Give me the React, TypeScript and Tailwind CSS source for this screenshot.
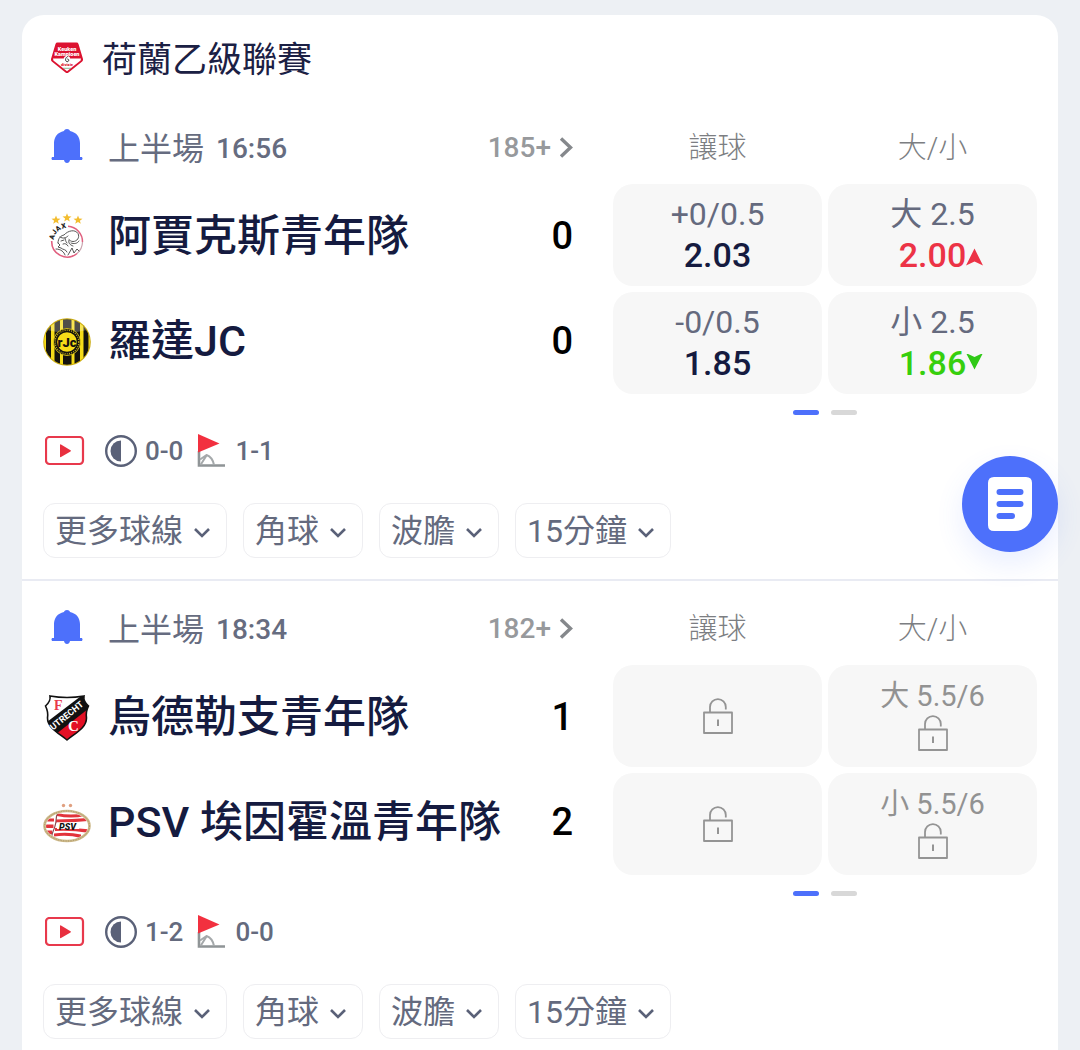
import type { ReactNode } from 'react';

type Trend = 'up' | 'down';

interface Odds {
  label?: string;
  value?: string;
  trend?: Trend;
}

interface Team {
  name: string;
  score: number;
  logo: ReactNode;
  handicap: Odds;
  total: Odds;
}

interface Match {
  id: string;
  period: string;
  clock: string;
  markets: string;
  halfTime: string;
  corners: string;
  teams: Team[];
}

function LeagueLogo() {
  return (
    <svg viewBox="0 0 34 34" className="h-[34px] w-[34px]" aria-hidden="true">
      <path
        d="M7.5 1.5h19q1.500 0 2 1.400L33 18q.4 1.500-.8 2.400L18.500 31.500q-1.500 1.100-3 0L1.800 20.400Q.6 19.500 1 18L5.500 2.900q.5-1.400 2-1.400Z"
        fill="#dc1230"
      />
      <path d="M3 17.500h28l-.4 2L17 30.300 3.400 19.500Z" fill="#fff" />
      <g fill="#fff" fontFamily="Roboto, sans-serif" fontWeight="900" fontSize="5.500" textAnchor="middle">
        <text x="17" y="9.500">Keuken</text>
        <text x="17" y="14.500">Kampioen</text>
      </g>
      <circle cx="17" cy="18.300" r="3.200" fill="#fff" />
      <path d="M17.800 15.500c-2.600 1-3 4.500-.8 5.200 2 .3 2.500-2.800.3-2.700" fill="none" stroke="#333" strokeWidth="1" />
      <text x="17" y="25" fill="#dc1230" fontFamily="Roboto, sans-serif" fontWeight="900" fontSize="4" textAnchor="middle">
        divisie
      </text>
      <path d="M13 27.300h8" stroke="#6fa67c" strokeWidth=".8" />
    </svg>
  );
}

function AjaxLogo() {
  const star = 'M0-4.500 1.200-1.500 4.500-1.300 1.900.7 2.800 3.800 0 2-2.800 3.800-1.900.7-4.500-1.300-1.200-1.500Z';
  return (
    <svg viewBox="0 0 48 48" className="h-12 w-12" aria-hidden="true">
      <g fill="#f3bd2f">
        <path transform="translate(13 7)" d={star} />
        <path transform="translate(24 4.800)" d={star} />
        <path transform="translate(35 7)" d={star} />
      </g>
      <path d="M25 13.200A15.500 15.500 0 0 1 39.500 29" fill="none" stroke="#e0607f" strokeWidth="1.500" />
      <path d="M39.500 29A15.500 15.500 0 0 1 34 40.500" fill="none" stroke="#c9a4ae" strokeWidth="1.200" />
      <path d="M8.700 28A15.500 15.500 0 0 0 34 40.500" fill="none" stroke="#e0607f" strokeWidth="1.600" />
      <g fill="#222" fontFamily="Roboto, sans-serif" fontWeight="900" fontSize="7">
        <text transform="translate(10.500 27) rotate(-72)">A</text>
        <text transform="translate(12 22) rotate(-53)">J</text>
        <text transform="translate(14.500 18.800) rotate(-36)">A</text>
        <text transform="translate(19 15.800) rotate(-14)">X</text>
      </g>
      <g fill="none" stroke="#444" strokeWidth=".9" strokeLinecap="round">
        <path d="M15 30c0-5 3-7.500 6-8 4-4.500 11-6 14-1.500 2 4-1 8-5 8-2 0-3-1-4-2" />
        <path d="M17 24c3 2 6 1 8-1M15 30l2 2-2 2 3 1c2 2 5 1 6 4M18 28l3-1M20 31c2-1 4 0 5 2M26 27c-1 3 1 5 4 6" />
        <path d="M13 36c5 0 8 3 9 6M25 42l4-7 2 5 3-4 2 2M28 30c3 1 6 1 8-2M22 25c1 2 0 3 2 5" />
      </g>
    </svg>
  );
}

function RodaLogo() {
  return (
    <svg viewBox="0 0 48 48" className="h-12 w-12" aria-hidden="true">
      <defs>
        <clipPath id="roda-clip">
          <circle cx="24" cy="24" r="22.800" />
        </clipPath>
      </defs>
      <circle cx="24" cy="24" r="23.800" fill="#c9a90c" />
      <g clipPath="url(#roda-clip)">
        <path fill="#f6dc18" d="M0 0h48v48H0z" />
        <path fill="#15130d" d="M3 0h5v48H3zM11.500 0h5.500v48h-5.500zM20 0h8.500v48H20zM31.500 0H37v48h-5.500zM40.500 0h5v48h-5z" />
        <path fill="#fff" opacity=".25" d="M4 0h40v12Q24 17 4 12Z" />
      </g>
      <circle cx="24" cy="24" r="13.500" fill="#15130d" stroke="#f6dc18" strokeWidth=".8" />
      <circle cx="24" cy="24" r="11.800" fill="none" stroke="#c7b320" strokeWidth="1.200" strokeDasharray="1 1.200" />
      <circle cx="24" cy="24" r="9.800" fill="#f6dc18" />
      <text x="24" y="28.500" fill="#15130d" fontFamily="Roboto, sans-serif" fontWeight="900" fontSize="13" textAnchor="middle">
        rJc
      </text>
    </svg>
  );
}

function UtrechtLogo() {
  return (
    <svg viewBox="0 0 48 48" className="h-12 w-12" aria-hidden="true">
      <defs>
        <clipPath id="utrecht-clip">
          <path d="M7 2q17 3 34 0-1 5 4.500 10-3 6-2 12c0 10-11 15-19.500 22C15.500 39 4.500 34 4.500 24q1-6-2-12Q8 7 7 2Z" />
        </clipPath>
      </defs>
      <g clipPath="url(#utrecht-clip)">
        <path fill="#fff" d="M0 0h48v48H0z" />
        <path fill="#e30f24" d="M48 12v36H14L8 38Z" />
        <path fill="#111" d="M0 31 42-1l8 12L8 44Z" />
      </g>
      <path
        d="M7 2q17 3 34 0-1 5 4.500 10-3 6-2 12c0 10-11 15-19.500 22C15.500 39 4.500 34 4.500 24q1-6-2-12Q8 7 7 2Z"
        fill="none"
        stroke="#111"
        strokeWidth="1.600"
      />
      <text x="11" y="16" fill="#e83a4a" fontFamily="Liberation Serif, serif" fontWeight="700" fontSize="14">
        F
      </text>
      <text x="25" y="37" fill="#fff" fontFamily="Liberation Serif, serif" fontWeight="700" fontSize="15">
        C
      </text>
      <text transform="translate(10 36.500) rotate(-39)" fill="#fff" fontFamily="Roboto, sans-serif" fontWeight="700" fontSize="9">
        UTRECHT
      </text>
    </svg>
  );
}

function PsvLogo() {
  return (
    <svg viewBox="0 0 48 48" className="h-12 w-12" aria-hidden="true">
      <defs>
        <clipPath id="psv-clip">
          <ellipse cx="24" cy="27" rx="21" ry="13.500" />
        </clipPath>
      </defs>
      <g fill="#e0a080">
        <circle cx="20.500" cy="6.500" r="1.700" />
        <circle cx="27.500" cy="6.500" r="1.700" />
      </g>
      <ellipse cx="24" cy="27" rx="22.500" ry="15" fill="#fff" stroke="#cdb98a" strokeWidth="2.600" />
      <ellipse cx="24" cy="27" rx="22.500" ry="15" fill="none" stroke="#a89464" strokeWidth="1" strokeDasharray="1 1.500" />
      <g clipPath="url(#psv-clip)">
        <path fill="#e2333b" d="M14 14q14 3 28 0v3q-14 3-28 0zM13 20.500q16 0 33-1.500v3q-16 2-33 1.500zM12 32q17-1 34 2v-3.500q-17-2.500-34-1.500zM11 37.500q14-2 27 1.500v-3.500q-13-3-27-1z" />
        <path fill="#e2333b" d="M2 19.500h9v3H2zM2 25.500h8.500V29H2zM2 31.500h7V35H2z" />
        <path d="M15 13c-3 6-1 9-3 14-1 5-4 7-3 12" fill="none" stroke="#8e4b50" strokeWidth="1.200" />
        <path d="M14 23.500h25l-3 6.500H14z" fill="#fff" />
      </g>
      <text
        x="24.500"
        y="30.500"
        fill="#111"
        fontFamily="Roboto, sans-serif"
        fontWeight="900"
        fontStyle="italic"
        fontSize="9"
        textAnchor="middle"
      >
        PSV
      </text>
    </svg>
  );
}

function BellIcon() {
  return (
    <svg viewBox="0 0 32 40" className="h-10 w-8" fill="#4d70fb" aria-hidden="true">
      <path d="M16 1c1.600 0 2.600.8 3.100 1.900C25.500 4.300 29 9 29 15v14h1.200c1 0 1.300.7 1.300 1.500s-.4 1.500-1.300 1.500H19c-.3 2-1.500 3-3 3s-2.700-1-3-3H1.800C.9 32 .5 31.300.5 30.500S.8 29 1.800 29H3V15C3 9 6.500 4.300 12.900 2.900 13.400 1.800 14.400 1 16 1Z" />
    </svg>
  );
}

function LockIcon() {
  return (
    <svg viewBox="0 0 30 36" className="h-9 w-[30px]" fill="none" stroke="#949494" strokeWidth="1.800" aria-hidden="true">
      <path d="M1 14.500h28v20.500H1zM7 14.500V9a7.900 7.900 0 0 1 15.800 0v2.500" strokeLinejoin="round" />
      <path d="M15 21.500v6.500" strokeWidth="2" />
    </svg>
  );
}

function VideoIcon() {
  return (
    <svg viewBox="0 0 40 30" className="h-[30px] w-10" aria-hidden="true">
      <rect x="1" y="1" width="37" height="27" rx="3.500" fill="none" stroke="#e8394c" strokeWidth="2.200" />
      <path d="M15 9v11.500q0 1 1 .5l9.500-5.500q1-.6 0-1.200L16 8.500q-1-.5-1 .5Z" fill="#e8303f" />
    </svg>
  );
}

function HalfTimeIcon() {
  return (
    <svg viewBox="0 0 32 32" className="h-8 w-8" aria-hidden="true">
      <circle cx="16" cy="16" r="14.800" fill="none" stroke="#5a6178" strokeWidth="2.400" />
      <path d="M16 5.500a10.500 10.500 0 0 0 0 21Z" fill="#5a6178" />
    </svg>
  );
}

function CornerIcon() {
  return (
    <svg viewBox="0 0 28 34" className="h-[34px] w-7" aria-hidden="true">
      <path d="M2 17v14.500h26" fill="none" stroke="#8f9496" strokeWidth="2.600" />
      <path d="M3 25.500 9.500 21q6 2 7.500 10M3.500 31l6-9.500" fill="none" stroke="#a5a9ab" strokeWidth="2" />
      <path d="M1 0 22.500 9.500 1 18.500Z" fill="#f2303f" />
    </svg>
  );
}

function ChevronDownIcon() {
  return (
    <svg viewBox="0 0 18 12" className="mt-1 h-3 w-[18px]" fill="none" stroke="#5a6178" strokeWidth="2.600" aria-hidden="true">
      <path d="m2 2 7 7 7-7" />
    </svg>
  );
}

function TrendIcon({ trend }: { trend: Trend }) {
  if (trend === 'up') {
    return (
      <svg viewBox="0 0 17 20" className="h-5 w-[17px]" aria-label="up">
        <path d="M8.500 2.500 17 19.500 8.500 15.500 0 19.500Z" fill="#ec3346" />
      </svg>
    );
  }
  return (
    <svg viewBox="0 0 17 20" className="h-5 w-[17px]" aria-label="down">
      <path d="M8.500 15.500 0-1l8.500 4L17-1Z" fill="#2fc916" />
    </svg>
  );
}

function OddsButton({ odds }: { odds: Odds }) {
  const color =
    odds.trend === 'up' ? 'text-[#ec3346]' : odds.trend === 'down' ? 'text-[#36cf0d]' : 'text-[#151b40]';

  if (!odds.value) {
    return (
      <button
        type="button"
        disabled
        aria-label={odds.label ?? '鎖定'}
        className="flex h-[102px] flex-col items-center justify-center gap-1 rounded-[20px] bg-[#f7f7f7] text-[29px] leading-[30px] text-[#929292]"
      >
        {odds.label && <span>{odds.label}</span>}
        <LockIcon />
      </button>
    );
  }

  return (
    <button
      type="button"
      className="flex h-[102px] flex-col items-center justify-center rounded-[20px] bg-[#f7f7f7] leading-[41px] hover:bg-gray-200"
    >
      <span className="text-[32px] text-[#656a7e]">{odds.label}</span>
      <span className={`grid grid-cols-[1fr_auto_1fr] items-center text-[34px] font-medium ${color}`}>
        <span className="w-[17px]" />
        {odds.value}
        <span className="w-[17px]">{odds.trend && <TrendIcon trend={odds.trend} />}</span>
      </span>
    </button>
  );
}

const filters = ['更多球線', '角球', '波膽', '15分鐘'];

const matches: Match[] = [
  {
    id: 'ajax-roda',
    period: '上半場',
    clock: '16:56',
    markets: '185+',
    halfTime: '0-0',
    corners: '1-1',
    teams: [
      {
        name: '阿賈克斯青年隊',
        score: 0,
        logo: <AjaxLogo />,
        handicap: { label: '+0/0.5', value: '2.03' },
        total: { label: '大 2.5', value: '2.00', trend: 'up' },
      },
      {
        name: '羅達JC',
        score: 0,
        logo: <RodaLogo />,
        handicap: { label: '-0/0.5', value: '1.85' },
        total: { label: '小 2.5', value: '1.86', trend: 'down' },
      },
    ],
  },
  {
    id: 'utrecht-psv',
    period: '上半場',
    clock: '18:34',
    markets: '182+',
    halfTime: '1-2',
    corners: '0-0',
    teams: [
      {
        name: '烏德勒支青年隊',
        score: 1,
        logo: <UtrechtLogo />,
        handicap: {},
        total: { label: '大 5.5/6' },
      },
      {
        name: 'PSV 埃因霍溫青年隊',
        score: 2,
        logo: <PsvLogo />,
        handicap: {},
        total: { label: '小 5.5/6' },
      },
    ],
  },
];

function MatchCard({ match }: { match: Match }) {
  return (
    <article className="border-b-2 border-[#e9ebf3] px-[21px] pt-3 pb-[21px]">
      <div className="grid grid-cols-[minmax(0,5fr)_minmax(0,4fr)] gap-x-10">
        <div>
          <div className="flex h-[72px] items-center">
            <button type="button" aria-label="通知" className="flex w-12 shrink-0 justify-center">
              <BellIcon />
            </button>
            <span className="ml-[17px] pt-0.5 text-[32px] text-[#666c80]">{match.period}</span>
            <span className="ml-3 pt-0.5 text-[28px] font-medium text-[#666c80]">{match.clock}</span>
            <a href="#markets" className="ml-auto flex items-center gap-2 text-[28px] font-medium text-[#97999c]">
              {match.markets}
              <svg viewBox="0 0 14 22" className="h-[22px] w-3.5" fill="none" stroke="#85888c" strokeWidth="3.400" aria-hidden="true">
                <path d="m2 1.500 9.500 9L2 19.500" />
              </svg>
            </a>
          </div>
          <div>
            {match.teams.map((team) => (
              <div key={team.name} className="flex h-[105px] items-center">
                {team.logo}
                <h3 className="ml-[17px] text-[43px] font-medium whitespace-nowrap text-[#151b40]">{team.name}</h3>
                <span className="ml-auto text-[38px] font-medium text-black">{team.score}</span>
              </div>
            ))}
          </div>
        </div>

        <div>
          <div className="grid h-[72px] grid-cols-2 items-center gap-1.5 pt-0.5 text-center text-[29px] font-light text-[#7c7e82]">
            <span>讓球</span>
            <span>大/小</span>
          </div>
          <div className="grid grid-cols-2 gap-1.5">
            {match.teams.flatMap((team) => [
              <OddsButton key={`${team.name}-handicap`} odds={team.handicap} />,
              <OddsButton key={`${team.name}-total`} odds={team.total} />,
            ])}
          </div>
          <div className="mt-4 flex justify-center gap-3">
            <span className="h-[5px] w-[26px] rounded-full bg-[#4d70fb]" />
            <span className="h-[5px] w-[26px] rounded-full bg-[#d8d8d8]" />
          </div>
        </div>
      </div>

      <div className="mt-[18px] flex h-9 items-center text-[26px] font-medium text-[#646a7d]">
        <button type="button" aria-label="直播" className="ml-0.5">
          <VideoIcon />
        </button>
        <span className="ml-5 flex items-center gap-2">
          <HalfTimeIcon />
          {match.halfTime}
        </span>
        <span className="ml-3.5 flex items-center gap-2.5">
          <CornerIcon />
          {match.corners}
        </span>
      </div>

      <div className="mt-[34px] flex gap-4">
        {filters.map((filter) => (
          <button
            key={filter}
            type="button"
            className="flex h-[55px] items-center gap-2.5 rounded-xl border border-[#eeeef1] pr-[15px] pl-[11px] text-[32px] text-[#646a7e] hover:bg-gray-50"
          >
            {filter}
            <ChevronDownIcon />
          </button>
        ))}
      </div>
    </article>
  );
}

export default function App() {
  return (
    <div className="min-h-screen bg-[#edf0f4] px-[22px] pt-[15px] font-[Roboto,'Noto_Sans_CJK_TC',sans-serif]">
      <main className="overflow-hidden rounded-t-[22px] bg-white">
        <header className="flex h-[85px] items-center px-[28px]">
          <LeagueLogo />
          <h2 className="ml-[18px] pt-2 text-[35px] text-[#1b2044]">荷蘭乙級聯賽</h2>
        </header>
        {matches.map((match) => (
          <MatchCard key={match.id} match={match} />
        ))}
      </main>

      <button
        type="button"
        aria-label="投注單"
        className="fixed top-[456px] right-[22px] flex h-24 w-24 items-center justify-center rounded-full bg-[#4d70fb] shadow-[0_12px_28px_rgba(77,112,251,0.12)]"
      >
        <svg viewBox="0 0 44 54" className="h-[54px] w-11" aria-hidden="true">
          <path d="M6 0h32q6 0 6 6v31a17 17 0 0 1-17 17H6q-6 0-6-6V6q0-6 6-6Z" fill="#fff" />
          <path d="M11.500 15h21M11.500 27h21M11.500 39h12.500" stroke="#4d70fb" strokeWidth="6" strokeLinecap="round" />
        </svg>
      </button>
    </div>
  );
}
